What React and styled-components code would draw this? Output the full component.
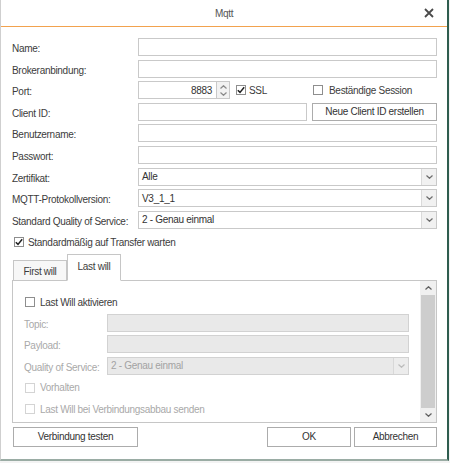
import React from "react";
import styled, { createGlobalStyle } from "styled-components";

const GlobalStyle = createGlobalStyle`
  html, body { margin: 0; padding: 0; background: #f3f3f3; }
  body {
    font-family: "Liberation Sans", Arial, sans-serif;
    font-size: 10px;
    letter-spacing: -0.3px;
    color: #3a3a3a;
  }
  * { box-sizing: border-box; }
`;

const Window = styled.div`
  width: 449px;
  height: 461px;
  background: #fff;
  border-left: 1px solid #cfcfcf;
  border-right: 2px solid #2f5d4f;
  border-bottom: 2px solid #9aaca4;
  display: flex;
  flex-direction: column;
`;

const TitleBar = styled.div`
  height: 27px;
  flex: none;
  border-bottom: 1px solid #f2a24e;
  display: grid;
  grid-template-columns: 1fr auto 1fr;
  align-items: center;
`;

const Title = styled.div`
  grid-column: 2;
  color: #555;
  font-size: 10px;
  padding-top: 1px;
`;

const CloseBtn = styled.div`
  grid-column: 3;
  justify-self: end;
  margin-right: 13px;
  width: 10px;
  height: 10px;
  display: flex;
`;

const Body = styled.div`
  flex: 1;
  padding: 11px 10px 0 11px;
  display: flex;
  flex-direction: column;
`;

const Form = styled.div`
  display: grid;
  grid-template-columns: 126px 1fr;
  grid-auto-rows: 18px;
  row-gap: 3.6px;
  align-items: center;
`;

const Label = styled.div`
  color: ${(p) => (p.$disabled ? "#a9a9a9" : "#3c3c3c")};
  white-space: nowrap;
  padding-top: 3px;
`;

const Input = styled.div`
  height: 18px;
  border: 1px solid ${(p) => (p.$disabled ? "#d2d2d2" : "#c9c9c9")};
  background: ${(p) => (p.$disabled ? "#e9e9e9" : "#fff")};
  display: flex;
  align-items: center;
  justify-content: ${(p) => (p.$right ? "flex-end" : "flex-start")};
  padding: 0 4px 0 3px;
  color: ${(p) => (p.$disabled ? "#a3a3a3" : "#333")};
  flex: ${(p) => (p.$w ? "none" : "1")};
  width: ${(p) => (p.$w ? `${p.$w}px` : "auto")};
  min-width: 0;
`;

const FieldRow = styled.div`
  display: flex;
  align-items: center;
  height: 18px;
`;

const Spinner = styled.div`
  width: 13px;
  height: 18px;
  border: 1px solid #c9c9c9;
  border-left: none;
  background: #f2f2f2;
  display: flex;
  flex-direction: column;
  align-items: center;
  justify-content: center;
  gap: 3px;
`;

const CheckLabel = styled.label`
  display: flex;
  align-items: center;
  gap: ${(p) => p.$gap || 4}px;
  margin-left: ${(p) => p.$ml || 0}px;
  padding-top: ${(p) => (p.$inline ? 0 : 2)}px;
  width: ${(p) => (p.$w ? `${p.$w}px` : "auto")};
  flex: none;
  color: ${(p) => (p.$disabled ? "#a9a9a9" : "#3c3c3c")};
  white-space: nowrap;
  grid-column: ${(p) => (p.$span ? "1 / -1" : "auto")};
`;

const Box = styled.span`
  width: 10px;
  height: 10px;
  border: 1px solid ${(p) => (p.$disabled ? "#d4d4d4" : "#8e8e8e")};
  background: #fff;
  display: inline-flex;
  align-items: center;
  justify-content: center;
  flex: none;
`;

const Button = styled.div`
  height: ${(p) => p.$h || 20}px;
  width: ${(p) => p.$w}px;
  border: 1px solid #acacac;
  background: #fff;
  display: flex;
  align-items: center;
  justify-content: center;
  color: #333;
  flex: none;
  margin-left: ${(p) => p.$ml || 0}px;
`;

const SelectBox = styled.div`
  height: 18px;
  border: 1px solid ${(p) => (p.$disabled ? "#d2d2d2" : "#c9c9c9")};
  background: ${(p) => (p.$disabled ? "#e9e9e9" : "#fff")};
  display: flex;
  align-items: stretch;
  color: ${(p) => (p.$disabled ? "#a3a3a3" : "#333")};
`;

const SelectText = styled.div`
  flex: 1;
  display: flex;
  align-items: center;
  padding-left: 3px;
`;

const ArrowBox = styled.div`
  width: 15px;
  border-left: 1px solid ${(p) => (p.$disabled ? "#d8d8d8" : "#dadada")};
  background: ${(p) => (p.$disabled ? "#ececec" : "#f1f1f1")};
  display: flex;
  align-items: center;
  justify-content: center;
`;

const TabStrip = styled.div`
  display: flex;
  align-items: flex-end;
  height: 26px;
  margin-top: 3.5px;
  padding-left: 1px;
  position: relative;
  z-index: 1;
`;

const Tab = styled.div`
  height: ${(p) => (p.$active ? 27 : 20)}px;
  width: ${(p) => p.$w}px;
  border: 1px solid #c6c6c6;
  border-bottom: ${(p) => (p.$active ? "1px solid #fff" : "none")};
  background: ${(p) => (p.$active ? "#fff" : "#f7f7f7")};
  display: flex;
  align-items: ${(p) => (p.$active ? "flex-start" : "center")};
  justify-content: center;
  padding-top: ${(p) => (p.$active ? 6 : 2)}px;
  margin-bottom: ${(p) => (p.$active ? -1 : 0)}px;
  color: #3c3c3c;
`;

const Panel = styled.div`
  height: 143px;
  border: 1px solid #c6c6c6;
  display: flex;
`;

const PanelContent = styled.div`
  flex: 1;
  padding: 11.5px 11px 0 11px;
`;

const InnerForm = styled.div`
  display: grid;
  grid-template-columns: 83px 1fr;
  grid-auto-rows: 18px;
  row-gap: 3.4px;
  align-items: center;
`;

const Scrollbar = styled.div`
  width: 16px;
  background: #f0f0f0;
  display: flex;
  flex-direction: column;
`;

const ScrollArrow = styled.div`
  height: 14px;
  display: flex;
  align-items: center;
  justify-content: center;
  flex: none;
`;

const Thumb = styled.div`
  flex: 1;
  background: #cdcdcd;
  margin: 0 1px;
`;

const Footer = styled.div`
  display: flex;
  align-items: center;
  margin-top: 4px;
  padding-left: 1px;
`;

const Spacer = styled.div`
  flex: 1;
`;

const CheckIcon = () => (
  <svg width="8" height="8" viewBox="0 0 8 8">
    <path d="M0.8 4.2 L3 6.4 L7.2 1.2" fill="none" stroke="#222" strokeWidth="1.5" />
  </svg>
);

const Checkbox = ({ checked, disabled }) => (
  <Box $disabled={disabled}>{checked && <CheckIcon />}</Box>
);

const Chevron = ({ up, color = "#6d6d6d" }) => (
  <svg width="7" height="4" viewBox="0 0 7 4">
    <path
      d={up ? "M0.5 3.5 L3.5 0.7 L6.5 3.5" : "M0.5 0.5 L3.5 3.3 L6.5 0.5"}
      fill="none"
      stroke={color}
      strokeWidth="1.2"
    />
  </svg>
);

const Select = ({ value, disabled }) => (
  <SelectBox $disabled={disabled}>
    <SelectText>{value}</SelectText>
    <ArrowBox $disabled={disabled}>
      <Chevron color={disabled ? "#bcbcbc" : "#6d6d6d"} />
    </ArrowBox>
  </SelectBox>
);

export default function App() {
  return (
    <>
      <GlobalStyle />
      <Window>
        <TitleBar>
          <Title>Mqtt</Title>
          <CloseBtn>
            <svg width="10" height="10" viewBox="0 0 10 10">
              <path d="M1 1 L9 9 M9 1 L1 9" stroke="#4a4a4a" strokeWidth="1.8" />
            </svg>
          </CloseBtn>
        </TitleBar>
        <Body>
          <Form>
            <Label>Name:</Label>
            <Input />
            <Label>Brokeranbindung:</Label>
            <Input />
            <Label>Port:</Label>
            <FieldRow>
              <Input $w={79} $right>8883</Input>
              <Spinner>
                <Chevron up color="#8a8a8a" />
                <Chevron color="#8a8a8a" />
              </Spinner>
              <CheckLabel $inline $ml={6} $w={71} $gap={3}>
                <Checkbox checked />
                SSL
              </CheckLabel>
              <CheckLabel $inline $ml={6} $gap={6}>
                <Checkbox />
                Beständige Session
              </CheckLabel>
            </FieldRow>
            <Label>Client ID:</Label>
            <FieldRow>
              <Input />
              <Button $w={125} $h={18} $ml={5}>
                Neue Client ID erstellen
              </Button>
            </FieldRow>
            <Label>Benutzername:</Label>
            <Input />
            <Label>Passwort:</Label>
            <Input />
            <Label>Zertifikat:</Label>
            <Select value="Alle" />
            <Label>MQTT-Protokollversion:</Label>
            <Select value="V3_1_1" />
            <Label>Standard Quality of Service:</Label>
            <Select value="2 - Genau einmal" />
            <CheckLabel $span $ml={2}>
              <Checkbox checked />
              Standardmäßig auf Transfer warten
            </CheckLabel>
          </Form>
          <TabStrip>
            <Tab $w={54}>First will</Tab>
            <Tab $w={54} $active>Last will</Tab>
          </TabStrip>
          <Panel>
            <PanelContent>
              <InnerForm>
                <CheckLabel $span $ml={1} $gap={5}>
                  <Checkbox />
                  Last Will aktivieren
                </CheckLabel>
                <Label $disabled>Topic:</Label>
                <Input $disabled />
                <Label $disabled>Payload:</Label>
                <Input $disabled />
                <Label $disabled>Quality of Service:</Label>
                <Select value="2 - Genau einmal" disabled />
                <CheckLabel $span $ml={1} $gap={5} $disabled>
                  <Checkbox disabled />
                  Vorhalten
                </CheckLabel>
                <CheckLabel $span $ml={1} $gap={5} $disabled>
                  <Checkbox disabled />
                  Last Will bei Verbindungsabbau senden
                </CheckLabel>
              </InnerForm>
            </PanelContent>
            <Scrollbar>
              <ScrollArrow>
                <Chevron up color="#606060" />
              </ScrollArrow>
              <Thumb />
              <ScrollArrow>
                <Chevron color="#606060" />
              </ScrollArrow>
            </Scrollbar>
          </Panel>
          <Footer>
            <Button $w={125}>Verbindung testen</Button>
            <Spacer />
            <Button $w={84}>OK</Button>
            <Button $w={83} $ml={3}>
              Abbrechen
            </Button>
          </Footer>
        </Body>
      </Window>
    </>
  );
}
